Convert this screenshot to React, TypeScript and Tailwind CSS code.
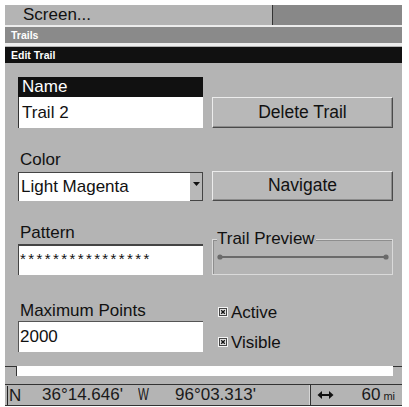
import React from "react";

function Btn({ label, h }: { label: string; h: string }) {
  return (
    <div
      className={`${h} self-end flex items-center justify-center bg-[#b8b8b8] border-t border-l border-[#ececec] border-r border-b border-r-[#4a4a4a] border-b-[#4a4a4a] shadow-[inset_-1px_-1px_0_#8c8c8c] text-[17.5px] text-[#111]`}
    >
      {label}
    </div>
  );
}

function Check({ label }: { label: string }) {
  return (
    <div className="h-[22px] flex items-center gap-[3px] text-[17px] text-[#111]">
      <svg width="10" height="10" viewBox="0 0 10 10" className="mt-[-2px]">
        <rect x="0" y="0" width="10" height="10" fill="#f4f4f4" />
        <rect x="1.5" y="1.5" width="7" height="7" fill="#e4e4e4" stroke="#444" strokeWidth="1" />
        <path d="M3.2 3.2 L6.8 6.8 M6.8 3.2 L3.2 6.8" stroke="#111" strokeWidth="1.4" />
      </svg>
      <span>{label}</span>
    </div>
  );
}

export default function App() {
  return (
    <div className="w-[409px] h-[407px] bg-white pt-[5px] pl-[5px] font-['Liberation_Sans',Arial,sans-serif]">
      <div className="w-[397px] h-[401px] bg-[#b4b4b4] flex flex-col text-[#111]">
        {/* title row */}
        <div className="flex h-[20px]">
          <div className="flex-1 pl-[18px] text-[17px] leading-[20px]">Screen...</div>
          <div className="w-[130px] bg-[#888888] border-l border-[#333]" />
        </div>
        <div className="h-[2px] bg-[#ededed]" />
        <div className="h-[16px] bg-[#8a8a8a] text-white font-bold text-[10.5px] leading-[16px] pl-[6px]">
          Trails
        </div>
        <div className="h-[3px] bg-[#ededed]" />
        <div className="h-[1px] bg-[#b4b4b4]" />
        <div className="h-[16px] bg-[#111] text-white font-bold text-[10.5px] leading-[16px] pl-[6px]">
          Edit Trail
        </div>

        {/* content */}
        <div className="px-[13px] pt-[14px] flex flex-col">
          {/* Row A */}
          <div className="grid grid-cols-[185px_181px] gap-x-[9px]">
            <div className="flex flex-col">
              <div className="h-[20px] bg-[#111] text-white text-[17px] leading-[20px] pl-[4px]">Name</div>
              <div className="h-[31px] bg-white border-l border-[#333] pl-[3px] text-[17px] leading-[31px]">
                Trail 2
              </div>
            </div>
            <Btn label="Delete Trail" h="h-[31px]" />
          </div>

          {/* Row B */}
          <div className="grid grid-cols-[185px_181px] gap-x-[9px] mt-[20px]">
            <div className="flex flex-col">
              <div className="h-[24px] text-[17px] leading-[24px] pl-[2px]">Color</div>
              <div className="h-[29px] flex">
                <div className="flex-1 bg-white border-t border-l border-[#444] pl-[2px] text-[17px] leading-[27px]">
                  Light Magenta
                </div>
                <div className="w-[13px] bg-[#b8b8b8] border-t border-[#444] border-r border-b flex justify-center pt-[9px]">
                  <svg width="7" height="4" viewBox="0 0 7 4">
                    <path d="M0 0 H7 L3.5 4 Z" fill="#111" />
                  </svg>
                </div>
              </div>
            </div>
            <Btn label="Navigate" h="h-[30px]" />
          </div>

          {/* Row C */}
          <div className="grid grid-cols-[185px_181px] gap-x-[9px] mt-[21px]">
            <div className="flex flex-col">
              <div className="h-[22px] text-[17px] leading-[22px] pl-[2px]">Pattern</div>
              <div className="h-[31px] bg-white border-t-2 border-l border-[#444] pl-[1px] text-[15px] leading-[26px] tracking-[2.4px]">
                ****************
              </div>
            </div>
            <div className="relative self-end h-[36px] border border-[#dadada] shadow-[inset_1px_1px_0_#8e8e8e]">
              <div className="absolute top-[-11px] left-[4px] pr-[1px] bg-[#b4b4b4] text-[17px] leading-[19px]">
                Trail Preview
              </div>
              <svg className="absolute left-[4px] top-[14px]" width="172" height="6" viewBox="0 0 172 6">
                <line x1="3" y1="3" x2="169" y2="3" stroke="#6a6a6a" strokeWidth="2" />
                <circle cx="3" cy="3" r="2.6" fill="#6a6a6a" />
                <circle cx="169" cy="3" r="2.6" fill="#6a6a6a" />
              </svg>
            </div>
          </div>

          {/* Row D */}
          <div className="grid grid-cols-[185px_181px] gap-x-[9px] mt-[25px]">
            <div className="flex flex-col">
              <div className="h-[21px] text-[17px] leading-[21px] pl-[2px]">Maximum Points</div>
              <div className="h-[31px] bg-white border-t border-l border-[#555] pl-[1px] text-[17px] leading-[29px]">
                2000
              </div>
            </div>
            <div className="flex flex-col pt-[2px] gap-[8px] pl-[6px]">
              <Check label="Active" />
              <Check label="Visible" />
            </div>
          </div>
        </div>

        {/* separator + white bar */}
        <div className="mt-[12px] h-[1px] bg-[#333]" />
        <div className="ml-[11px] w-[377px] h-[10px] bg-white border-l border-[#333]" />
        <div className="h-[9px]" />

        {/* status bar */}
        <div className="h-[22px] border-t border-b border-[#333] flex items-center text-[17px] leading-[20px] text-[#1a1a1a]">
          <div className="w-[2px]" />
          <div className="w-[35px] h-[19px] border-l border-[#222] pl-[1px] leading-[19px]">N</div>
          <div className="w-[96px]">36°14.646'</div>
          <div className="w-[37px]">
            <span className="inline-block text-[16px] scale-x-[0.72] origin-left">W</span>
          </div>
          <div className="w-[135px]">96°03.313'</div>
          <div className="flex-1 h-[20px] flex items-center border-l border-[#333] shadow-[-1px_0_0_#d6d6d6] pl-[6px] pr-[7px]">
            <svg width="17" height="10" viewBox="0 0 17 10">
              <path d="M2 5 H15" stroke="#111" strokeWidth="2" />
              <path d="M0.5 5 L5 1 V9 Z" fill="#111" />
              <path d="M16.5 5 L12 1 V9 Z" fill="#111" />
            </svg>
            <div className="flex-1 text-right">
              60<span className="text-[11px] ml-[3px]">mi</span>
            </div>
          </div>
        </div>
      </div>
    </div>
  );
}
